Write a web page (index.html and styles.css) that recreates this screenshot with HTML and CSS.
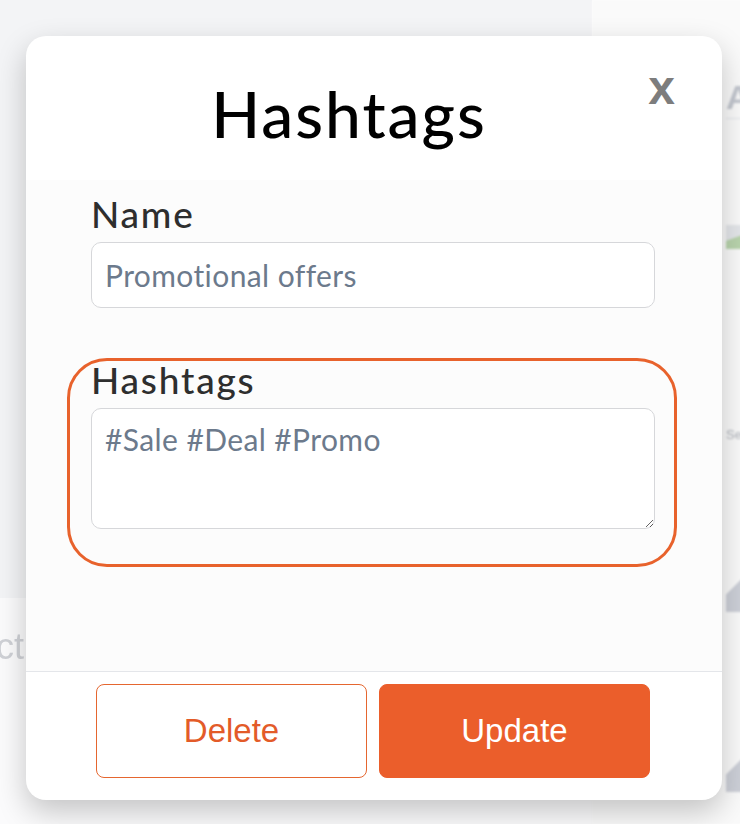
FILE: index.html
```html
<!DOCTYPE html>
<html lang="en">
<head>
  <meta charset="UTF-8" />
  <meta name="viewport" content="width=device-width, initial-scale=1.0"/>
  <title>Hashtags</title>
  <link rel="stylesheet" href="styles.css">
</head>
<body>
  <div class="page">
    <div class="left-panel"></div>
    <div class="right-panel">
      <div class="right-head">A</div>
      <div class="thumb green"></div>
      <div class="thumb-label">Se</div>
      <div class="slash"></div>
      <div class="slash second"></div>
    </div>
    <div class="left-bottom">ct</div>
  </div>

  <div class="modal">
    <div class="modal-header">
      <h1>Hashtags</h1>
      <button class="close">x</button>
    </div>

    <div class="modal-body">
      <div class="field">
        <label for="name">Name</label>
        <input id="name" type="text" placeholder="Promotional offers">
      </div>

      <div class="field highlight">
        <label for="tags">Hashtags</label>
        <textarea id="tags" placeholder="#Sale #Deal #Promo"></textarea>
      </div>
    </div>

    <div class="modal-footer">
      <button class="btn btn-outline">Delete</button>
      <button class="btn btn-primary">Update</button>
    </div>
  </div>
</body>
</html>
```

FILE: styles.css
```css
html, body {
  margin: 0;
  height: 100%;
}

body {
  font-family: Lato, "Open Sans", sans-serif;
  background: #fbfbfc;
  position: relative;
  overflow: hidden;
}

/* blurred app behind the modal */
.page {
  display: grid;
  grid-template-columns: 592px 1fr;
  grid-template-rows: 598px 1fr;
  height: 824px;
}

.left-panel {
  background: #f3f4f6;
}

.right-panel {
  grid-row: span 2;
  background: #fafafa;
  padding-left: 134px;
  filter: blur(1px);
}

.right-head {
  margin-top: 78px;
  height: 40px;
  border-bottom: 1px solid #e3e5ea;
  font: bold 34px "Liberation Sans", sans-serif;
  color: #c3c7cf;
}

.thumb {
  width: 30px;
  height: 24px;
  margin-top: 106px;
  background: linear-gradient(160deg, #e4e6ea 45%, #b9d4ad 46%);
}

.thumb-label {
  margin-top: 178px;
  font: 13px "Liberation Sans", sans-serif;
  color: #b0b4bb;
}

.slash {
  width: 24px;
  height: 60px;
  margin-top: 110px;
  background: linear-gradient(135deg, transparent 50%, #cdd0d8 51%);
}

.slash.second {
  margin-top: 120px;
}

.left-bottom {
  padding-top: 28px;
  margin-left: -4px;
  font: 36px "Liberation Sans", sans-serif;
  color: #cfd1d6;
  filter: blur(0.6px);
}

/* modal */
.modal {
  position: absolute;
  top: 36px;
  left: 26px;
  width: 696px;
  height: 764px;
  background: #fff;
  border-radius: 20px;
  box-shadow: 0 12px 30px rgba(0, 0, 0, 0.22);
  display: flex;
  flex-direction: column;
  overflow: hidden;
}

.modal-header {
  height: 144px;
  position: relative;
  text-align: center;
}

.modal-header h1 {
  margin: 0;
  padding: 38px 50px 0 0;
  font-size: 64px;
  font-weight: 500;
  letter-spacing: 2px;
  line-height: 80px;
  color: #000;
}

.close {
  position: absolute;
  top: 28px;
  right: 47px;
  border: none;
  background: none;
  padding: 0;
  font: bold 48px "Liberation Sans", sans-serif;
  color: #7d7d7d;
  line-height: 48px;
}

.modal-body {
  flex: 1;
  background: #fcfcfc;
  padding: 15px 67px 0 65px;
}

.field label {
  display: block;
  font-size: 37px;
  font-weight: 500;
  letter-spacing: 1.8px;
  color: #2e2e2e;
  line-height: 38px;
  margin-bottom: 9px;
}

.field input,
.field textarea {
  display: block;
  box-sizing: border-box;
  width: 100%;
  border: 1px solid #d6d7da;
  border-radius: 10px;
  background: #fff;
  font-family: Lato, sans-serif;
  font-size: 30px;
  letter-spacing: 0.4px;
  color: #6c7a8c;
  padding: 0 13px;
}

.field input {
  height: 66px;
}

.field textarea {
  height: 121px;
  padding-top: 12px;
  resize: vertical;
}

.field input::placeholder,
.field textarea::placeholder {
  color: #6c7a8c;
}

.highlight {
  margin: 50px -22px 0 -24px;
  padding: 0 19px 35px 21px;
  border: 3px solid #e8622c;
  border-radius: 40px;
}

.modal-footer {
  height: 129px;
  box-sizing: border-box;
  border-top: 1px solid #e4e6ea;
  display: flex;
  gap: 12px;
  padding: 12px 72px 0 70px;
}

.btn {
  flex: 1;
  height: 94px;
  border-radius: 8px;
  font: 33px "Liberation Sans", Arial, sans-serif;
}

.btn-outline {
  background: #fff;
  border: 1px solid #e5662f;
  color: #e35b29;
}

.btn-primary {
  background: #eb5e2b;
  border: 1px solid #eb5e2b;
  color: #fff;
}
```
